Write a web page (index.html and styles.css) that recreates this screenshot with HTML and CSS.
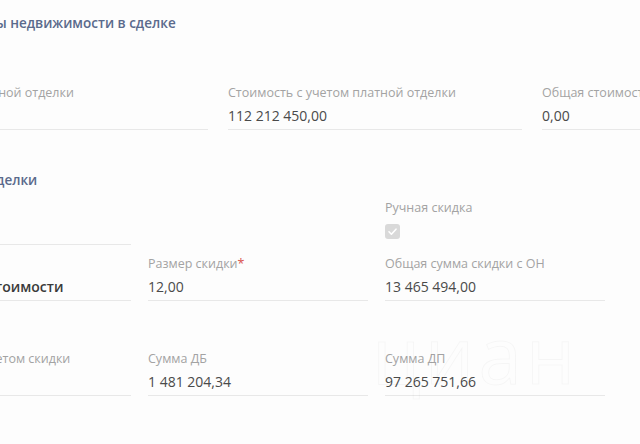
FILE: index.html
```html
<!DOCTYPE html>
<html lang="ru">
<head>
<meta charset="utf-8">
<link rel="stylesheet" href="styles.css">
</head>
<body>
<div class="page">
  <section class="block block-one">
    <h2 class="heading heading-one">Параметры недвижимости в сделке</h2>
    <div class="subtitle">Отделка в</div>
    <div class="grid grid-one">
      <div class="field">
        <div class="label">Стоимость платной отделки</div>
        <div class="value">&nbsp;</div>
      </div>
      <div class="field">
        <div class="label">Стоимость с учетом платной отделки</div>
        <div class="value">112 212 450,00</div>
      </div>
      <div class="field">
        <div class="label">Общая стоимость</div>
        <div class="value">0,00</div>
      </div>
    </div>
  </section>

  <section class="block block-two">
    <h2 class="heading heading-two">Условия сделки</h2>
    <div class="grid grid-two">
      <div class="field field-top">
        <div class="label">&nbsp;</div>
        <div class="value">&nbsp;</div>
      </div>
      <div class="cell-empty"></div>
      <div class="check-field">
        <div class="label">Ручная скидка</div>
        <div class="checkbox">
          <svg width="15" height="15" viewBox="0 0 15 15"><path d="M4 7.8 L6.4 10.2 L11 5.2" fill="none" stroke="#fff" stroke-width="1.6" stroke-linecap="round" stroke-linejoin="round"/></svg>
        </div>
      </div>

      <div class="field">
        <div class="label">Тип</div>
        <div class="value dark">Процент от стоимости</div>
      </div>
      <div class="field">
        <div class="label">Размер скидки<span class="req">*</span></div>
        <div class="value">12,00</div>
      </div>
      <div class="field">
        <div class="label">Общая сумма скидки с ОН</div>
        <div class="value">13 465 494,00</div>
      </div>

      <div class="field row-gap">
        <div class="label">Стоимость с учетом скидки</div>
        <div class="value">98 746 956,00</div>
      </div>
      <div class="field row-gap">
        <div class="label">Сумма ДБ</div>
        <div class="value">1 481 204,34</div>
      </div>
      <div class="field row-gap">
        <div class="label">Сумма ДП</div>
        <div class="value">97 265 751,66</div>
      </div>
    </div>
  </section>
  <div class="watermark">циан</div>
</div>
</body>
</html>
```

FILE: styles.css
```css
html, body {
  margin: 0;
  padding: 0;
  background: #fdfdfd;
  overflow: hidden;
  width: 640px;
  height: 444px;
}

.page {
  position: relative;
  font-family: "Open Sans", "Noto Sans", sans-serif;
  width: 640px;
  height: 444px;
  overflow: hidden;
}

.block-one {
  margin-left: -98px;
  padding-top: 14px;
}

.heading {
  margin: 0;
  font-size: 13.5px;
  line-height: 18px;
  font-weight: 600;
  color: #5a6a8c;
}

.heading-one {
  margin-left: 26px;
}

.subtitle {
  margin-top: 22px;
  margin-left: 30px;
  font-size: 12.5px;
  line-height: 16px;
  color: #a3a3a3;
}

.grid {
  display: grid;
}

.grid-one {
  margin-top: 15px;
  grid-template-columns: 306px 294px 294px;
  column-gap: 20px;
}

.field {
  display: flex;
  flex-direction: column;
  border-bottom: 1px solid #e8e8e8;
  padding-bottom: 4px;
}

.label {
  font-size: 12.5px;
  line-height: 16px;
  color: #a3a3a3;
  white-space: nowrap;
}

.req {
  color: #d9534f;
}

.value {
  margin-top: 6px;
  font-size: 14px;
  line-height: 18px;
  color: #4a4a4a;
  white-space: nowrap;
}

.value.dark {
  color: #3a3a3a;
  font-weight: 600;
}

.block-two {
  margin-left: -96px;
  padding-top: 41px;
}

.heading-two {
  margin-left: 25px;
}

.grid-two {
  margin-top: 11px;
  grid-template-columns: 227px 220px 220px;
  column-gap: 17px;
  row-gap: 11px;
}

.field-top {
  align-self: end;
}

.check-field {
  display: flex;
  flex-direction: column;
  gap: 8px;
}

.checkbox {
  width: 15px;
  height: 15px;
  border-radius: 3px;
  background: #d9d9d9;
  display: flex;
}

.row-gap {
  margin-top: 39px;
}

.watermark {
  position: absolute;
  left: 372px;
  top: 312px;
  font-size: 78px;
  line-height: 84px;
  color: transparent;
  -webkit-text-stroke: 1px rgba(0, 0, 0, 0.03);
  letter-spacing: 4px;
  pointer-events: none;
}
```
